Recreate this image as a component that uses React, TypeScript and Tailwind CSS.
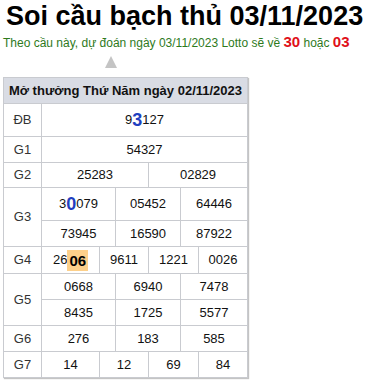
import type { ReactNode } from 'react'

const label = 'flex items-center justify-center bg-white text-[13px] text-[#333]'
const cell = 'flex items-center justify-center bg-white text-[13px] text-[#111]'

function Hi({ children }: { children: ReactNode }) {
  return <span className="text-[18px] font-bold leading-none text-[#1f3fc0]">{children}</span>
}

export default function App() {
  return (
    <div className="w-[373px] h-[385px] bg-white font-['Liberation_Sans',Arial,sans-serif] overflow-hidden">
      {/* Title */}
      <h1 className="pl-[6px] pt-[1px] text-[27px] font-bold leading-[31px] text-black">
        Soi cầu bạch thủ 03/11/2023
      </h1>
      <p className="pl-[3px] text-[12px] leading-[20px] text-[#2e7a1c]">
        Theo cầu này, dự đoán ngày 03/11/2023 Lotto sẽ về{' '}
        <span className="text-[15px] font-bold text-[#e0101a]">30</span> hoặc{' '}
        <span className="text-[15px] font-bold text-[#e0101a]">03</span>
      </p>

      {/* Arrow */}
      <div className="ml-[105px] mt-[3px] h-0 w-0 border-x-[6px] border-b-[12px] border-x-transparent border-b-[#c4c4c4]" />

      {/* Results table */}
      <div className="ml-[3px] mt-[9px] w-[245px] shadow-[1px_1px_1px_#c4c4c4]">
        <div className="grid grid-cols-[37px_57px_15px_32px_31px_17px_48px] grid-rows-[25px_32px_25px_24px_32px_25px_26px_25px_25px_25px_25px] gap-px bg-[#c9cbd0] p-px">
          <div className="col-span-7 flex items-center justify-center bg-[#d9dce4] text-[13px] font-bold text-[#111]">
            Mở thưởng Thứ Năm ngày 02/11/2023
          </div>

          <div className={label}>ĐB</div>
          <div className={`${cell} col-span-6`}>
            9<Hi>3</Hi>127
          </div>

          <div className={label}>G1</div>
          <div className={`${cell} col-span-6`}>54327</div>

          <div className={label}>G2</div>
          <div className={`${cell} col-span-3`}>25283</div>
          <div className={`${cell} col-span-3`}>02829</div>

          <div className={`${label} row-span-2`}>G3</div>
          <div className={`${cell} col-span-2`}>
            3<Hi>0</Hi>079
          </div>
          <div className={`${cell} col-span-2`}>05452</div>
          <div className={`${cell} col-span-2`}>64446</div>
          <div className={`${cell} col-span-2`}>73945</div>
          <div className={`${cell} col-span-2`}>16590</div>
          <div className={`${cell} col-span-2`}>87922</div>

          <div className={label}>G4</div>
          <div className={cell}>
            26
            <span className="bg-[#fdd08a] px-[2px] py-[2px] text-[15px] font-bold leading-[17px] text-black">06</span>
          </div>
          <div className={`${cell} col-span-2`}>9611</div>
          <div className={`${cell} col-span-2`}>1221</div>
          <div className={cell}>0026</div>

          <div className={`${label} row-span-2`}>G5</div>
          <div className={`${cell} col-span-2`}>0668</div>
          <div className={`${cell} col-span-2`}>6940</div>
          <div className={`${cell} col-span-2`}>7478</div>
          <div className={`${cell} col-span-2`}>8435</div>
          <div className={`${cell} col-span-2`}>1725</div>
          <div className={`${cell} col-span-2`}>5577</div>

          <div className={label}>G6</div>
          <div className={`${cell} col-span-2`}>276</div>
          <div className={`${cell} col-span-2`}>183</div>
          <div className={`${cell} col-span-2`}>585</div>

          <div className={label}>G7</div>
          <div className={cell}>14</div>
          <div className={`${cell} col-span-2`}>12</div>
          <div className={`${cell} col-span-2`}>69</div>
          <div className={cell}>84</div>
        </div>
      </div>
    </div>
  )
}
